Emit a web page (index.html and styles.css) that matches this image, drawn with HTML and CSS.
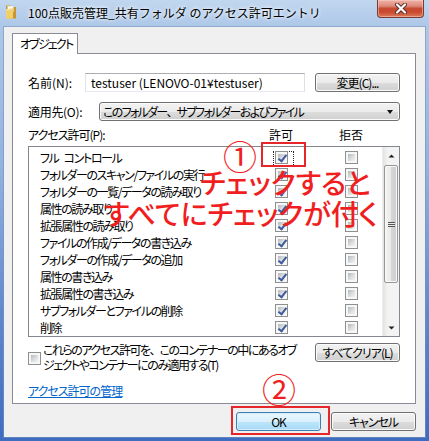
FILE: index.html
```html
<!DOCTYPE html>
<html lang="ja">
<head>
<meta charset="utf-8">
<title>アクセス許可エントリ</title>
<link rel="stylesheet" href="styles.css">
</head>
<body>
<div class="window">
  <header class="titlebar">
    <svg class="folder-icon" width="12" height="15" viewBox="0 0 12 15">
      <path d="M1 1.5h4.5l1 1.5H11v11.5H1z" fill="#c9952e"/>
      <rect x="2.5" y="2" width="6" height="6" fill="#fbfbf6" stroke="#c8c2b0" stroke-width="0.5"/>
      <path d="M1 5.5l7 -1.5v10.5l-7 0.5z" fill="#f1cf6c"/>
      <path d="M1 5.5l7 -1.5v1l-7 1.5z" fill="#fbe6a3"/>
    </svg>
    <span class="title">100点販売管理_共有フォルダ のアクセス許可エントリ</span>
    <button class="close" type="button" aria-label="閉じる">
      <svg width="14" height="11" viewBox="0 0 14 11">
        <path d="M3 1.5l8 8M11 1.5l-8 8" stroke="#5b2a26" stroke-width="4" stroke-linecap="round"/>
        <path d="M3 1.5l8 8M11 1.5l-8 8" stroke="#fff" stroke-width="2.2" stroke-linecap="round"/>
      </svg>
    </button>
  </header>

  <main class="client">
    <div class="tabs"><span class="tab">オブジェクト</span></div>

    <section class="panel">
      <div class="name-row">
        <span class="lbl lbl-name">名前(N):</span>
        <div class="textbox">testuser (LENOVO-01¥testuser)</div>
        <button class="btn btn-side" type="button">変更(C)...</button>
      </div>

      <div class="apply-row">
        <span class="lbl lbl-apply">適用先(O):</span>
        <div class="combo">このフォルダー<span class="wide">、</span>サブフォルダーおよびファイル<span class="combo-arrow"></span></div>
      </div>

      <div class="perm-head">
        <span class="perm-label">アクセス許可(P):</span>
        <span class="col-head">許可</span>
        <span></span>
        <span class="col-head">拒否</span>
      </div>

      <div class="listbox">
        <ul class="rows">
          <li class="row"><span>フル コントロール</span><span class="cell"><span class="focus"></span><i class="cb on"></i></span><span></span><span class="cell"><i class="cb"></i></span></li>
          <li class="row"><span>フォルダーのスキャン/ファイルの実行</span><span class="cell"><i class="cb on"></i></span><span></span><span class="cell"><i class="cb"></i></span></li>
          <li class="row"><span>フォルダーの一覧/データの読み取り</span><span class="cell"><i class="cb on"></i></span><span></span><span class="cell"><i class="cb"></i></span></li>
          <li class="row"><span>属性の読み取り</span><span class="cell"><i class="cb on"></i></span><span></span><span class="cell"><i class="cb"></i></span></li>
          <li class="row"><span>拡張属性の読み取り</span><span class="cell"><i class="cb on"></i></span><span></span><span class="cell"><i class="cb"></i></span></li>
          <li class="row"><span>ファイルの作成/データの書き込み</span><span class="cell"><i class="cb on"></i></span><span></span><span class="cell"><i class="cb"></i></span></li>
          <li class="row"><span>フォルダーの作成/データの追加</span><span class="cell"><i class="cb on"></i></span><span></span><span class="cell"><i class="cb"></i></span></li>
          <li class="row"><span>属性の書き込み</span><span class="cell"><i class="cb on"></i></span><span></span><span class="cell"><i class="cb"></i></span></li>
          <li class="row"><span>拡張属性の書き込み</span><span class="cell"><i class="cb on"></i></span><span></span><span class="cell"><i class="cb"></i></span></li>
          <li class="row"><span>サブフォルダーとファイルの削除</span><span class="cell"><i class="cb on"></i></span><span></span><span class="cell"><i class="cb"></i></span></li>
          <li class="row"><span>削除</span><span class="cell"><i class="cb on"></i></span><span></span><span class="cell"><i class="cb"></i></span></li>
        </ul>
        <div class="scrollbar">
          <div class="sb-btn"><svg width="7" height="4" viewBox="0 0 7 4"><path d="M0.5 3.5L3.5 0.5L6.5 3.5z" fill="#222"/></svg></div>
          <div class="sb-thumb"><span class="grip"></span></div>
          <div class="sb-track"></div>
          <div class="sb-btn"><svg width="7" height="4" viewBox="0 0 7 4"><path d="M0.5 0.5L3.5 3.5L6.5 0.5z" fill="#222"/></svg></div>
        </div>
      </div>

      <div class="inherit">
        <i class="cb cb-inherit"></i>
        <p class="inherit-text">これらのアクセス許可を<span class="wide">、</span>このコンテナーの中にあるオブ<br>ジェクトやコンテナーにのみ適用する(T)</p>
        <button class="btn btn-side btn-clear" type="button">すべてクリア(L)</button>
      </div>

      <a class="link" href="#">アクセス許可の管理</a>
    </section>

    <div class="actions">
      <button class="btn btn-default" type="button">OK</button>
      <button class="btn" type="button">キャンセル</button>
    </div>
  </main>

  <!-- red callouts drawn over the dialog -->
  <span class="mark mark-check"></span>
  <span class="callout num num-1">①</span>
  <span class="callout note note-1">チェックすると</span>
  <span class="callout note note-2">すべてにチェックが付く</span>
  <span class="callout num num-2">②</span>
  <span class="mark mark-ok"></span>
</div>
</body>
</html>
```

FILE: styles.css
```css
* { box-sizing: border-box; }

html, body {
  margin: 0;
  padding: 0;
}

body {
  width: 429px;
  height: 441px;
  overflow: hidden;
  font-family: "Noto Sans CJK JP", "Noto Sans", sans-serif;
  font-size: 12px;
  color: #000;
}

button {
  font: inherit;
  color: inherit;
  letter-spacing: inherit;
  padding: 0;
  margin: 0;
}

/* window frame */
.window {
  position: relative;
  width: 429px;
  height: 441px;
  display: flex;
  flex-direction: column;
  background: linear-gradient(180deg, #c1d7ef 0px, #adc7e8 27px, #91b1df 170px, #5a84cb 330px, #3e6cc0 100%);
}

.titlebar {
  flex: none;
  height: 27px;
  display: flex;
  align-items: flex-start;
}

.folder-icon {
  margin: 4px 0 0 5px;
}

.title {
  margin: 5px 0 0 11px;
  font-size: 12px;
  line-height: 16px;
  white-space: nowrap;
  text-shadow: 0 0 5px #fff, 0 0 3px #eaf2fb;
}

.close {
  margin: 0 5px 0 auto;
  width: 47px;
  height: 18px;
  border: 1px solid #7a3b33;
  border-top: none;
  border-radius: 0 0 4px 4px;
  background: linear-gradient(180deg, #eeb2a6 0%, #de8c7c 35%, #c74a34 50%, #c9492f 70%, #dd7a5a 100%);
  box-shadow: inset 0 0 0 1px rgba(255, 220, 210, 0.45);
  display: flex;
  align-items: center;
  justify-content: center;
}

/* client area */
.client {
  flex: 1;
  margin: 0 4px 4px;
  background: #f0f0f0;
  box-shadow: 0 0 0 1px rgba(120, 145, 185, 0.6);
  display: flex;
  flex-direction: column;
  font-feature-settings: "palt" 1;
  letter-spacing: -1px;
}

/* full-width ideographic comma, as the system UI font draws it */
.wide {
  font-feature-settings: normal;
  letter-spacing: -2px;
}

.tabs {
  margin: 6px 0 0 8px;
  height: 20px;
  display: flex;
}

.tab {
  position: relative;
  z-index: 1;
  width: 66px;
  height: 21px;
  padding-left: 7px;
  border: 1px solid #898c95;
  border-bottom: none;
  background: #fff;
  line-height: 19px;
  white-space: nowrap;
  letter-spacing: -1.8px;
}

.panel {
  margin-left: 8px;
  width: 404px;
  height: 351px;
  border: 1px solid #898c95;
  background: #fff;
  padding: 0 15px;
}

.lbl {
  flex: none;
  line-height: 19px;
}

.name-row,
.apply-row {
  display: flex;
  height: 19px;
}

.name-row { margin-top: 19px; }
.apply-row { margin-top: 10px; }

.lbl-name {
  width: 57px;
  letter-spacing: 0;
}

.lbl-apply {
  width: 71px;
  letter-spacing: -0.3px;
}

.textbox {
  width: 220px;
  height: 19px;
  padding-left: 5px;
  border: 1px solid;
  border-color: #abadb3 #dbdfe6 #e3e9ef #e2e3ea;
  background: #fff;
  line-height: 17px;
  white-space: nowrap;
  letter-spacing: 0;
  font-feature-settings: normal;
}

/* push buttons */
.btn {
  width: 85px;
  height: 19px;
  border: 1px solid #707070;
  border-radius: 3px;
  background: linear-gradient(180deg, #f2f2f2 0%, #ebebeb 50%, #dddddd 51%, #cfcfcf 100%);
  box-shadow: inset 0 0 0 1px #fbfbfb;
  line-height: 16px;
  text-align: center;
  white-space: nowrap;
}

.btn-side {
  flex: none;
  margin-left: 10px;
}

.btn-default {
  border-color: #3c7fb1;
  background: linear-gradient(180deg, #eaf6fd 0%, #d9f0fc 50%, #bee6fd 51%, #a7d9f5 100%);
  box-shadow: inset 0 0 0 1px #d6eefb;
}

.combo {
  position: relative;
  width: 301px;
  height: 19px;
  padding-left: 3px;
  border: 1px solid #707070;
  border-radius: 3px;
  background: linear-gradient(180deg, #f2f2f2 0%, #ebebeb 50%, #dddddd 51%, #cfcfcf 100%);
  box-shadow: inset 0 0 0 1px #fbfbfb;
  line-height: 17px;
  white-space: nowrap;
  letter-spacing: -1.7px;
}

.combo-arrow {
  position: absolute;
  right: 6px;
  top: 7px;
  width: 0;
  height: 0;
  border-left: 3.5px solid transparent;
  border-right: 3.5px solid transparent;
  border-top: 4px solid #111;
}

/* permissions table */
.perm-head {
  margin-top: 6px;
  height: 16px;
  line-height: 16px;
  display: grid;
  grid-template-columns: 231px 44px 26px 44px;
}

.perm-label {
  letter-spacing: -1px;
}

.col-head {
  text-align: center;
  letter-spacing: 0;
}

.listbox {
  margin-top: 3px;
  height: 191px;
  border: 1px solid #828790;
  background: #fff;
  display: flex;
}

.rows {
  flex: 1;
  margin: 0;
  padding: 2px 0 0 11px;
  list-style: none;
  letter-spacing: -1.4px;
  word-spacing: 4px;
}

.row {
  display: grid;
  grid-template-columns: 219px 44px 26px 44px;
  height: 17px;
  line-height: 17px;
  align-items: center;
  white-space: nowrap;
}

.cell {
  position: relative;
  display: flex;
  justify-content: center;
  padding-left: 1px;
}

.focus {
  position: absolute;
  left: 14px;
  top: 0;
  width: 21px;
  height: 16px;
  border: 1px dotted #222;
}

/* checkbox */
.cb {
  position: relative;
  display: block;
  flex: none;
  width: 13px;
  height: 13px;
  padding: 2px;
  border: 1px solid #8e8f8f;
  background: linear-gradient(135deg, #b4b8bd 0%, #dcdee0 55%, #f1f1f1 100%) content-box, #f7f7f7;
}

.cb.on::after {
  content: "";
  position: absolute;
  left: 4px;
  top: 1px;
  width: 3px;
  height: 7px;
  border-right: 2px solid #3d5a9c;
  border-bottom: 2px solid #3d5a9c;
  transform: rotate(38deg);
}

/* scrollbar */
.scrollbar {
  flex: none;
  width: 17px;
  display: flex;
  flex-direction: column;
  background: linear-gradient(90deg, #e3e3e3 0%, #f3f3f3 30%, #f3f3f3 100%);
  border-left: 1px solid #ececec;
}

.sb-btn {
  flex: none;
  height: 17px;
  display: flex;
  align-items: center;
  justify-content: center;
}

.sb-thumb {
  flex: none;
  margin: 1px 1px 0 1px;
  height: 118px;
  border: 1px solid #979797;
  border-radius: 2px;
  background: linear-gradient(90deg, #f5f5f5 0%, #e9e9e9 50%, #d6d6d6 51%, #cdcdcd 100%);
  box-shadow: inset 0 0 0 1px #f9f9f9;
  display: flex;
  align-items: center;
  justify-content: center;
}

.grip {
  width: 7px;
  height: 5px;
  background: repeating-linear-gradient(180deg, #555 0px, #555 1px, #e8e8e8 1px, #e8e8e8 2px);
}

.sb-track {
  flex: 1;
}

/* inherit option */
.inherit {
  margin-top: 5px;
  display: flex;
  align-items: flex-start;
}

.cb-inherit {
  margin-top: 10px;
}

.inherit-text {
  margin: 0 0 0 2px;
  line-height: 15px;
  white-space: nowrap;
  letter-spacing: -1.5px;
}

.btn-clear {
  margin-left: auto;
  margin-top: 1px;
}

.link {
  display: block;
  margin-top: 11px;
  width: max-content;
  line-height: 15px;
  color: #0066cc;
  text-decoration: underline;
}

/* dialog buttons */
.actions {
  display: flex;
  justify-content: flex-end;
  gap: 10px;
  margin: 8px 9px 0 0;
}

/* red callouts */
.mark {
  position: absolute;
  border: 2px solid #e6262b;
}

.mark-check {
  left: 261px;
  top: 142px;
  width: 45px;
  height: 25px;
}

.mark-ok {
  left: 231px;
  top: 406px;
  width: 99px;
  height: 29px;
}

.callout {
  position: absolute;
  color: #f01e1e;
  white-space: nowrap;
  font-feature-settings: "palt" 1;
}

.num {
  font-size: 34px;
  line-height: 34px;
  font-weight: 400;
}

.num-1 {
  left: 223px;
  top: 139px;
}

.num-2 {
  left: 262px;
  top: 372px;
}

.note {
  font-size: 28px;
  line-height: 32px;
  font-weight: 500;
}

.note-1 {
  left: 200px;
  top: 166px;
}

.note-2 {
  left: 104px;
  top: 197px;
}
```
